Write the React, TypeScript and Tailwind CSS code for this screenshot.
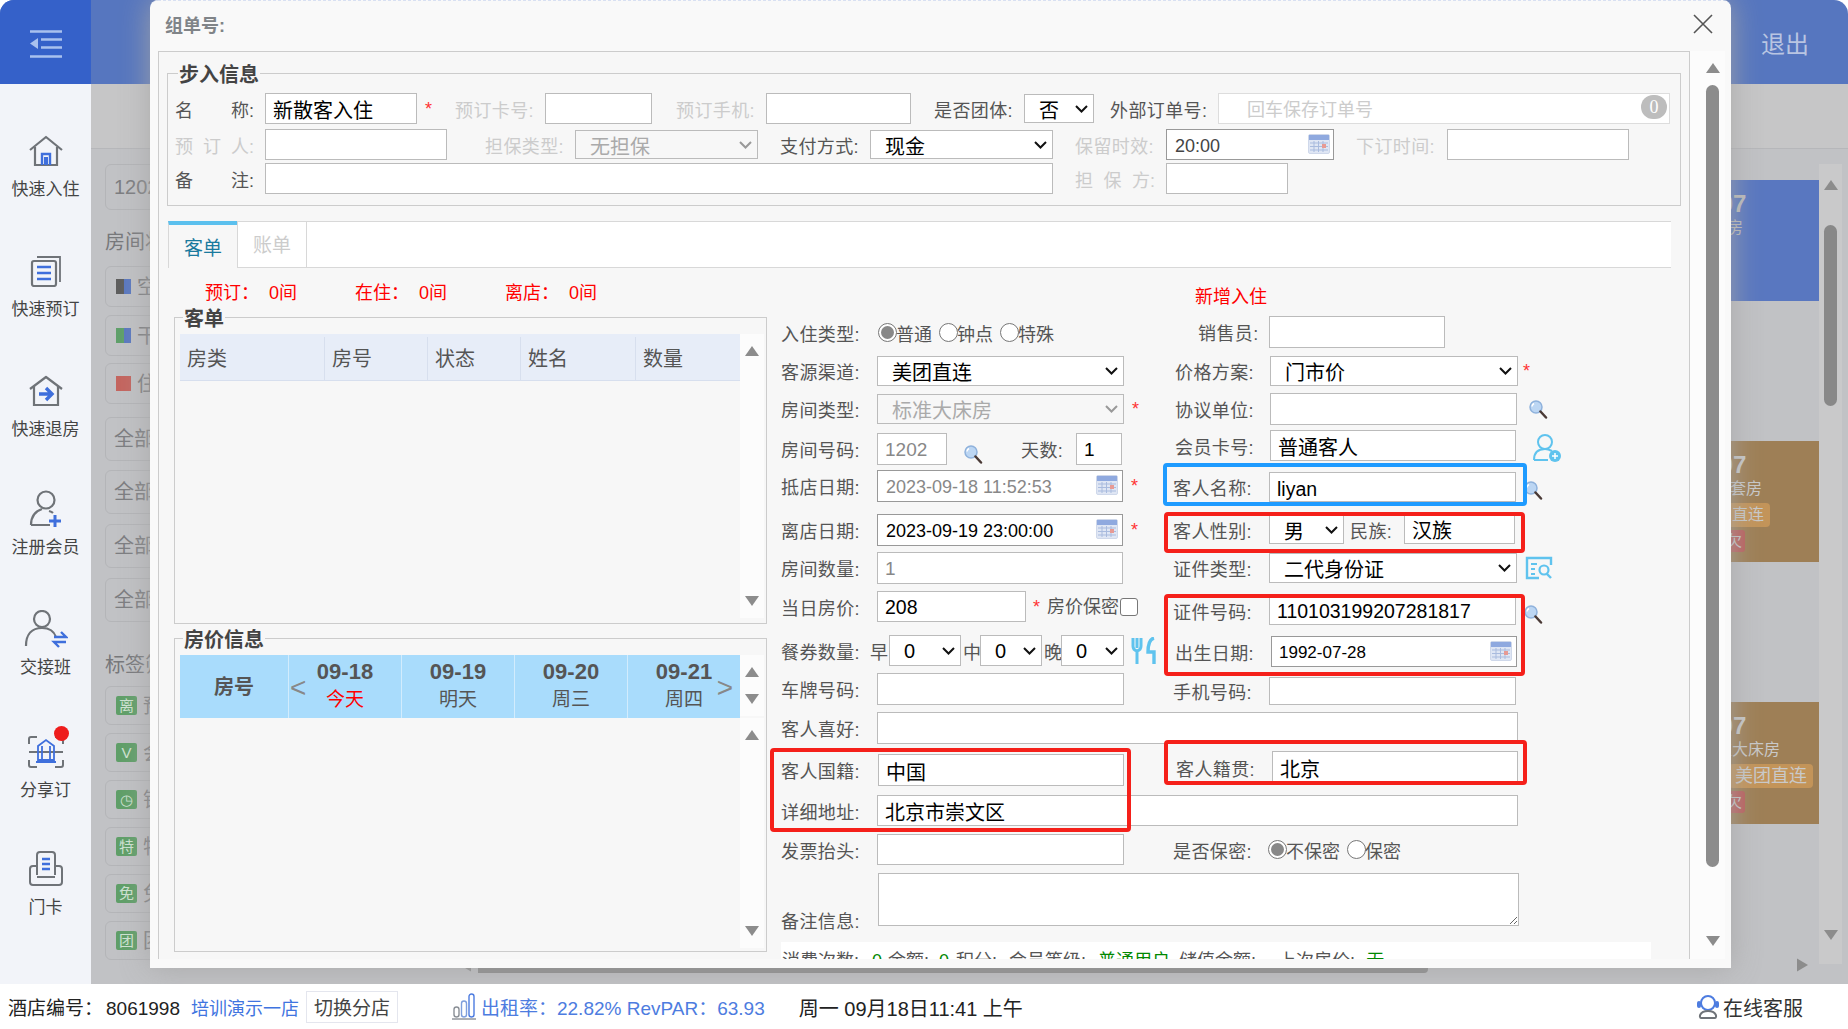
import type { ReactNode } from "react";

const fld = "border border-[#bbb] bg-white outline-none";

function Input({ className = "", value = "", text = "text-[20px] text-black", pad = "pl-[7px]" }: { className?: string; value?: string; text?: string; pad?: string }) {
  return <input readOnly value={value} className={`${fld} ${text} ${pad} shrink-0 pt-[2px] ${className}`} />;
}

function Select({ className = "", value, disabled = false }: { className?: string; value: string; disabled?: boolean }) {
  return (
    <div className={`relative shrink-0 ${className}`}>
      <select disabled={disabled} defaultValue={value} className={`h-full w-full appearance-none border border-[#bbb] pl-[14px] pt-[1px] text-[20px] outline-none ${disabled ? "bg-[#f7f7f7] text-[#aaa]" : "bg-white text-black"}`}>
        <option>{value}</option>
      </select>
      <svg viewBox="0 0 13 8" className="pointer-events-none absolute right-[6px] top-1/2 h-[8px] w-[13px] -translate-y-1/2" fill="none">
        <path d="M1 1l5.500 5.500L12 1" stroke={disabled ? "#999" : "#111"} strokeWidth="2" />
      </svg>
    </div>
  );
}

function Label({ children, className = "" }: { children: ReactNode; className?: string }) {
  return <span className={`mt-[4px] shrink-0 whitespace-nowrap text-[18px] leading-none tracking-[0.4px] ${className}`}>{children}</span>;
}

// 名 称: style labels, spread over the label column
function SpreadLabel({ chars, off = false }: { chars: string[]; off?: boolean }) {
  return (
    <span className={`mt-[4px] flex w-[79px] shrink-0 justify-between text-[18px] leading-none ${off ? "text-[#ccc]" : "text-[#555]"}`}>
      {chars.map((c) => <span key={c}>{c}</span>)}
    </span>
  );
}

function Star({ className = "" }: { className?: string }) {
  return <span className={`shrink-0 text-[18px] leading-none text-[#f33] ${className}`}>*</span>;
}

function Calendar({ className = "" }: { className?: string }) {
  return (
    <svg viewBox="0 0 22 20" className={`absolute h-[20px] w-[22px] ${className}`}>
      <rect x="0.5" y="0.5" width="21" height="19" rx="1.5" fill="#dfe6f4" stroke="#cfd8ea" />
      <rect x="1" y="1" width="20" height="5" fill="#8fa9df" />
      <path d="M2 9h18M2 12.5h18M2 16h18M6 7v11M10.500 7v11M15 7v11" stroke="#a9bbde" strokeWidth="1" />
      <rect x="14" y="10" width="4" height="4" fill="#e79a94" />
    </svg>
  );
}

function Search({ className = "" }: { className?: string }) {
  return (
    <svg viewBox="0 0 20 20" className={`h-[20px] w-[20px] shrink-0 ${className}`}>
      <circle cx="8" cy="8" r="6" fill="#bcd6f3" stroke="#8fb2dc" strokeWidth="1.500" />
      <path d="M6 4.500a4 4 0 0 0-2 3" stroke="#fff" strokeWidth="1.500" fill="none" />
      <path d="M12.500 12.500l5.500 6" stroke="#4a3a36" strokeWidth="2.500" strokeLinecap="round" />
    </svg>
  );
}

function Radio({ on = false, className = "" }: { on?: boolean; className?: string }) {
  return (
    <span className={`flex h-[19px] w-[19px] shrink-0 items-center justify-center rounded-full border border-[#777] bg-white ${className}`}>
      {on && <span className="h-[13px] w-[13px] rounded-full bg-[#888]" />}
    </span>
  );
}

function Arrow({ down = false, className = "" }: { down?: boolean; className?: string }) {
  return (
    <svg viewBox="0 0 14 10" className={`h-[10px] w-[14px] shrink-0 ${className}`}>
      <path d={down ? "M0 0h14L7 10z" : "M7 0l7 10H0z"} fill="#8c8c8c" />
    </svg>
  );
}

function ScrollStrip({ className = "" }: { className?: string }) {
  return (
    <div className={`flex w-[24px] flex-col items-center justify-between bg-[#fcfcfc] ${className}`}>
      <Arrow />
      <Arrow down />
    </div>
  );
}

function SideItem({ icon, label, className }: { icon: ReactNode; label: string; className: string }) {
  return (
    <div className={`flex flex-col items-center ${className}`}>
      <div className="flex h-[36px] items-center justify-center">{icon}</div>
      <span className="mt-[10px] text-[17px] leading-[22px] text-[#444]">{label}</span>
    </div>
  );
}

const gray = "#6f7378";
const blue = "#3f6fdc";

const sideIcons = {
  home: (
    <svg width="36" height="32" viewBox="0 0 36 32" fill="none">
      <path d="M2 15L18 2l16 13" stroke={gray} strokeWidth="2.200" strokeLinejoin="round" />
      <path d="M7 12v18h22V12" stroke={gray} strokeWidth="2.200" />
      <path d="M14 30V19h8v11" stroke={blue} strokeWidth="2.400" />
      <rect x="16" y="22" width="4" height="8" fill={blue} />
    </svg>
  ),
  book: (
    <svg width="32" height="32" viewBox="0 0 32 32" fill="none">
      <path d="M7 2h23v25" stroke={gray} strokeWidth="1.800" />
      <rect x="2" y="6" width="24" height="25" rx="2" stroke={gray} strokeWidth="2.200" />
      <path d="M7 12h14M7 18h14M7 24h14" stroke={blue} strokeWidth="2.400" />
    </svg>
  ),
  out: (
    <svg width="36" height="32" viewBox="0 0 36 32" fill="none">
      <path d="M2 14L18 2l16 12" stroke={gray} strokeWidth="2.200" strokeLinejoin="round" />
      <path d="M6 11v19h24V11" stroke={gray} strokeWidth="2.200" />
      <path d="M11 19h12M18 13l6 6-6 6" stroke={blue} strokeWidth="3.400" />
    </svg>
  ),
  member: (
    <svg width="34" height="38" viewBox="0 0 34 38" fill="none">
      <circle cx="17" cy="10" r="8.500" stroke={gray} strokeWidth="2.200" />
      <path d="M2 35c0-9 5-14 11-16M2 35h19" stroke={gray} strokeWidth="2.200" />
      <path d="M20 21c2 .6 3 1 4 2" stroke={gray} strokeWidth="2.200" />
      <path d="M26 25v12M20 31h12" stroke={blue} strokeWidth="3" />
    </svg>
  ),
  shift: (
    <svg width="44" height="38" viewBox="0 0 44 38" fill="none">
      <circle cx="18" cy="9" r="8" stroke={gray} strokeWidth="2.200" />
      <path d="M2 36c0-12 6-18 16-18 7 0 12 3 14 9" stroke={gray} strokeWidth="2.200" />
      <path d="M30 27h12l-5-5M42 32H30l5 5" stroke={blue} strokeWidth="2.400" />
    </svg>
  ),
  share: (
    <div className="relative">
      <svg width="36" height="34" viewBox="0 0 36 34" fill="none">
        <path d="M9 2H3a2 2 0 0 0-2 2v5M27 2h6a2 2 0 0 1 2 2v5M9 32H3a2 2 0 0 1-2-2v-5M27 32h6a2 2 0 0 0 2-2v-5" stroke={gray} strokeWidth="2" />
        <path d="M1 17h34" stroke={gray} strokeWidth="2" />
        <path d="M10 25V11l8-6 8 6v14zM14 11v14M22 11v14M8 27h20" stroke={blue} strokeWidth="1.800" />
      </svg>
      <span className="absolute -right-[5px] -top-[9px] h-[15px] w-[15px] rounded-full bg-[#ee1c1c]" />
    </div>
  ),
  card: (
    <svg width="36" height="36" viewBox="0 0 36 36" fill="none">
      <path d="M9 24V4a3 3 0 0 1 3-3h12a3 3 0 0 1 3 3v20" stroke={gray} strokeWidth="2" />
      <path d="M9 15H5a3 3 0 0 0-3 3v13a3 3 0 0 0 3 3h26a3 3 0 0 0 3-3V18a3 3 0 0 0-3-3h-4M9 26h18" stroke={gray} strokeWidth="2" />
      <path d="M14 8h8M14 13h8M14 18h8" stroke={blue} strokeWidth="2.400" />
    </svg>
  ),
};

const tagIcon = "flex h-[19px] w-[21px] shrink-0 items-center justify-center rounded-[2px] bg-[#5f9f68] text-[15px] leading-none text-[#cfe3d2]";

function BgRow({ children, className }: { children: ReactNode; className: string }) {
  return <div className={`flex w-[260px] items-center gap-[6px] rounded-[6px] border border-[#b4b5b8] pl-[8px] text-[20px] text-[#7c7d80] ${className}`}>{children}</div>;
}

function Swatch({ a, b }: { a: string; b: string }) {
  return (
    <span className="ml-[2px] flex h-[15px] w-[15px] shrink-0">
      <span className={`w-1/2 ${a}`} />
      <span className={`w-1/2 ${b}`} />
    </span>
  );
}

function DateCol({ date, day, today = false }: { date: string; day: string; today?: boolean }) {
  return (
    <div className="flex flex-col items-center border-l border-[#d2ecfd] pt-[4px]">
      <span className="text-[22px] font-bold leading-[26px] text-[#555]">{date}</span>
      <span className={`mt-[2px] text-[19px] leading-[26px] ${today ? "text-[#f00]" : "text-[#555]"}`}>{day}</span>
    </div>
  );
}

function Legend({ children }: { children: ReactNode }) {
  return (
    <legend className="ml-[3px] px-[1px] text-[20px] font-bold leading-[24px] text-[#444]">
      <span className="relative top-[2px]">{children}</span>
    </legend>
  );
}

function Count({ name }: { name: string }) {
  return (
    <span className="w-[150px]">{name}：<span className="ml-[10px]">0间</span></span>
  );
}

const lab = "w-[96px] text-[#555]";
const digits = "text-[19.5px] text-black";

export default function App() {
  return (
    <div className="relative flex h-[1029px] w-[1848px] flex-col overflow-hidden bg-white [font-family:'Liberation_Sans','Noto_Sans_CJK_SC',sans-serif]">
      {/* page behind the dialog */}
      <div className="flex h-[84px] shrink-0 items-center justify-between rounded-t-[14px] bg-[#5676bf]">
        <div className="flex h-full w-[91px] items-center justify-center rounded-tl-[14px] bg-[#3561c9] pt-[4px]">
          <svg width="32" height="28" viewBox="0 0 32 28">
            <path d="M0 1.500h32M11 9.500h21M11 17.500h21M0 26.500h32" stroke="#a9c1ee" strokeWidth="2.400" />
            <path d="M8 8v11l-8-5.500z" fill="#a9c1ee" />
          </svg>
        </div>
        <span className="mr-[39px] mt-[5px] text-[24px] text-[#b9c5e2]">退出</span>
      </div>

      <div className="flex min-h-0 flex-1">
        <div className="w-[91px] shrink-0 bg-[#f2f4f9] pt-[49px]">
          <SideItem icon={sideIcons.home} label="快速入住" className="h-[120px]" />
          <SideItem icon={sideIcons.book} label="快速预订" className="h-[120px]" />
          <SideItem icon={sideIcons.out} label="快速退房" className="h-[118px]" />
          <SideItem icon={sideIcons.member} label="注册会员" className="h-[120px]" />
          <SideItem icon={sideIcons.shift} label="交接班" className="h-[123px]" />
          <SideItem icon={sideIcons.share} label="分享订" className="h-[117px]" />
          <SideItem icon={sideIcons.card} label="门卡" className="h-[100px]" />
        </div>

        <div className="flex min-w-0 flex-1 flex-col bg-[#c1c2c5]">
          <div className="h-[65px] shrink-0 border-b border-[#b6b7ba] bg-[#c6c6c7]" />
          <div className="flex min-h-0 flex-1">
            <div className="flex w-[300px] shrink-0 flex-col pl-[14px] pt-[15px]">
              <BgRow className="h-[46px]">1202</BgRow>
              <span className="mt-[20px] text-[20px] leading-[24px] text-[#77787b]">房间状态</span>
              <BgRow className="mt-[12px] h-[41px]"><Swatch a="bg-[#5e5e5e]" b="bg-[#5a78c0]" />空房</BgRow>
              <BgRow className="mt-[8px] h-[41px]"><Swatch a="bg-[#5fa06a]" b="bg-[#5a78c0]" />干净</BgRow>
              <BgRow className="mt-[7px] h-[41px]"><Swatch a="bg-[#c4655f]" b="bg-[#c4655f]" />住人</BgRow>
              <BgRow className="mt-[13px] h-[44px]">全部房型</BgRow>
              <BgRow className="mt-[9px] h-[44px]">全部楼栋</BgRow>
              <BgRow className="mt-[10px] h-[44px]">全部楼层</BgRow>
              <BgRow className="mt-[10px] h-[44px]">全部渠道</BgRow>
              <span className="mt-[31px] text-[20px] leading-[24px] text-[#77787b]">标签筛选</span>
              <BgRow className="mt-[9px] h-[39px]"><span className={`ml-[2px] ${tagIcon}`}>离</span>预离</BgRow>
              <BgRow className="mt-[8px] h-[39px]"><span className={`ml-[2px] ${tagIcon}`}>V</span>会员</BgRow>
              <BgRow className="mt-[8px] h-[39px]"><span className={`ml-[2px] ${tagIcon}`}>◷</span>钟点</BgRow>
              <BgRow className="mt-[8px] h-[39px]"><span className={`ml-[2px] ${tagIcon}`}>特</span>特殊</BgRow>
              <BgRow className="mt-[8px] h-[39px]"><span className={`ml-[2px] ${tagIcon}`}>免</span>免费</BgRow>
              <BgRow className="mt-[8px] h-[39px]"><span className={`ml-[2px] ${tagIcon}`}>团</span>团队</BgRow>
            </div>
            <div className="flex min-w-0 flex-1 flex-col">
              <div className="flex min-h-0 flex-1 justify-end pr-[6px] pt-[15px]">
                <div className="flex w-[220px] flex-col pt-[16px]">
                  <div className="h-[121px] bg-[#5977c0] text-[#bcbcbc]">
                    <div className="ml-[94px] pt-[12px] text-[24px] font-bold leading-[24px]">1207</div>
                    <div className="ml-[96px] text-[16px] leading-[24px]">标准房</div>
                  </div>
                  <div className="mt-[140px] h-[121px] bg-[#9e7f56] text-[#c9c9c9]">
                    <div className="ml-[94px] pt-[12px] text-[24px] font-bold leading-[24px]">1207</div>
                    <div className="ml-[99px] text-[16px] leading-[24px]">豪华套房</div>
                    <div className="ml-[127px] mt-[2px] w-fit rounded-[4px] bg-[#c39459] px-[6px] text-[16px] leading-[24px]">直连</div>
                    <div className="ml-[124px] mt-[3px] w-fit rounded-[3px] bg-[#bb5f5c] pl-[4px] pr-[3px] text-[15px] leading-[22px]">欠</div>
                  </div>
                  <div className="mt-[140px] h-[122px] bg-[#9e7f56] text-[#c9c9c9]">
                    <div className="ml-[94px] pt-[12px] text-[24px] font-bold leading-[24px]">1207</div>
                    <div className="ml-[101px] text-[16px] leading-[24px]">标准大床房</div>
                    <div className="ml-[130px] mt-[2px] w-fit rounded-[4px] bg-[#c39459] px-[6px] text-[18px] leading-[24px]">美团直连</div>
                    <div className="ml-[124px] mt-[3px] w-fit rounded-[3px] bg-[#bb5f5c] pl-[4px] pr-[3px] text-[15px] leading-[22px]">欠</div>
                  </div>
                </div>
                <div className="flex w-[23px] flex-col items-center bg-[#c9c9ca] pt-[16px]">
                  <Arrow className="mb-[35px]" />
                  <div className="h-[181px] w-[13px] rounded-[7px] bg-[#888]" />
                  <Arrow down className="mt-auto mb-[24px]" />
                </div>
              </div>
              <div className="flex h-[20px] shrink-0 pr-[40px]">
                <svg viewBox="0 0 10 12" className="ml-[69px] mt-[-6px] h-[14px] w-[11px] rotate-180"><path d="M0 0l10 6-10 6z" fill="#8c8c8c" /></svg>
                <div className="ml-[7px] h-[9px] w-[950px] shrink-0 rounded-r-[4px] bg-[#888]" />
                <svg viewBox="0 0 10 12" className="ml-auto mt-[-6px] h-[14px] w-[11px]"><path d="M0 0l10 6-10 6z" fill="#8c8c8c" /></svg>
              </div>
            </div>
          </div>
        </div>
      </div>

      <div className="relative z-20 flex h-[45px] shrink-0 items-center bg-white pl-[8px] text-[19px] leading-none text-[#222]">
        <span className="mt-[4px]">酒店编号：</span>
        <span className="ml-[3px] mt-[4px]">8061998</span>
        <span className="ml-[11px] mt-[4px] text-[18px] text-[#3f74e0]">培训演示一店</span>
        <span className="ml-[7px] flex h-[32px] w-[92px] items-center justify-center border border-[#e4e6ee] pt-[3px] text-[#444]">切换分店</span>
        <svg width="24" height="27" viewBox="0 0 24 27" fill="none" className="ml-[54px]">
          <rect x="2" y="14" width="5" height="10" rx="2.500" stroke="#8a8f96" strokeWidth="1.400" />
          <rect x="9.500" y="8" width="5" height="16" rx="2.500" stroke="#7f9fdc" strokeWidth="1.400" />
          <rect x="17" y="1" width="5" height="23" rx="2.500" stroke="#4d7ce0" strokeWidth="1.400" />
          <path d="M0 26h24" stroke="#8a8f96" strokeWidth="1.400" />
        </svg>
        <span className="ml-[5px] mt-[4px] text-[#4d7ce0]">出租率：22.82% RevPAR：63.93</span>
        <span className="ml-[34px] mt-[4px] text-[20px] text-[#222]">周一 09月18日11:41 上午</span>
        <svg width="24" height="26" viewBox="0 0 24 26" fill="none" className="ml-auto">
          <circle cx="12" cy="9" r="7" stroke="#4d7ce0" strokeWidth="2" />
          <rect x="1" y="7" width="4" height="7" rx="2" fill="#4d7ce0" />
          <rect x="19" y="7" width="4" height="7" rx="2" fill="#4d7ce0" />
          <path d="M5 24c-2 0-2-7 7-7s9 7 7 7z" stroke="#6f7378" strokeWidth="2" />
        </svg>
        <span className="ml-[3px] mr-[45px] mt-[4px] text-[20px] text-[#333]">在线客服</span>
      </div>

      {/* dialog */}
      <div className="absolute left-[150px] top-0 z-10 flex h-[968px] w-[1581px] flex-col overflow-hidden rounded-tl-[8px] rounded-tr-[8px] border-t border-dashed border-[#d8e0f2] bg-[#f9f9f9] pl-[8px] shadow-[0_0_30px_rgba(165,165,165,0.9)]">
        <div className="relative flex h-[50px] shrink-0 items-center pl-[7px] text-[18px] font-bold text-[#808488]">
          组单号:
          <svg width="20" height="20" viewBox="0 0 20 20" className="absolute right-[18px] top-[13px]"><path d="M1 1l18 18M19 1L1 19" stroke="#555" strokeWidth="1.600" /></svg>
        </div>
        <div className="flex h-[908px] shrink-0">
          <div className="flex h-full w-[1532px] shrink-0 flex-col overflow-hidden border border-b-0 border-[#ccc] bg-[#f7f7f7] pl-[8px]">
            <fieldset className="mt-[9px] h-[145px] w-[1514px] shrink-0 border border-[#ccc] pl-[7px] pt-[8px]">
              <Legend>步入信息</Legend>
              <div className="flex h-[31px] items-center">
                <SpreadLabel chars={["名", "称:"]} />
                <Input className="ml-[11px] h-[31px] w-[152px]" value="新散客入住" />
                <Star className="ml-[8px] w-[10px]" />
                <Label className="ml-[20px] w-[79px] text-[#ccc]">预订卡号:</Label>
                <Input className="ml-[11px] h-[31px] w-[107px]" />
                <Label className="ml-[24px] w-[79px] text-[#ccc]">预订手机:</Label>
                <Input className="ml-[11px] h-[31px] w-[145px]" />
                <Label className="ml-[23px] w-[80px] text-[#555]">是否团体:</Label>
                <Select className="ml-[10px] h-[29px] w-[70px]" value="否" />
                <Label className="ml-[16px] w-[97px] text-[#555]">外部订单号:</Label>
                <div className="relative ml-[11px] h-[31px] w-[452px] shrink-0">
                  <input readOnly placeholder="回车保存订单号" className="h-full w-full border border-[#ddd] bg-white pl-[28px] pt-[3px] text-[18px] outline-none placeholder:text-[#ccc]" />
                  <span className="absolute right-[3px] top-[2px] flex h-[24px] w-[26px] items-center justify-center rounded-full bg-[#bdbdbd] text-[18px] leading-none text-white [font-family:'Liberation_Serif',serif]">0</span>
                </div>
              </div>
              <div className="mt-[5px] flex h-[31px] items-center">
                <SpreadLabel off chars={["预", "订", "人:"]} />
                <Input className="ml-[11px] h-[31px] w-[182px]" />
                <Label className="ml-[38px] w-[79px] text-[#ccc]">担保类型:</Label>
                <Select disabled className="ml-[11px] h-[29px] w-[183px]" value="无担保" />
                <Label className="ml-[22px] w-[80px] text-[#555]">支付方式:</Label>
                <Select className="ml-[10px] h-[29px] w-[183px]" value="现金" />
                <Label className="ml-[22px] w-[80px] text-[#ccc]">保留时效:</Label>
                <div className="relative ml-[11px] h-[31px] w-[168px] shrink-0">
                  <input readOnly value="20:00" className="h-full w-full border border-[#999] bg-white pl-[8px] pt-[4px] text-[18px] text-[#444] outline-none" />
                  <Calendar className="right-[4px] top-[5px]" />
                </div>
                <Label className="ml-[22px] w-[80px] text-[#ccc]">下订时间:</Label>
                <Input className="ml-[11px] h-[31px] w-[182px]" />
              </div>
              <div className="mt-[3px] flex h-[31px] items-center">
                <SpreadLabel chars={["备", "注:"]} />
                <Input className="ml-[11px] h-[31px] w-[788px]" />
                <span className="ml-[22px] mt-[4px] flex w-[80px] shrink-0 justify-between text-[18px] leading-none text-[#ccc]"><span>担</span><span>保</span><span>方:</span></span>
                <Input className="ml-[11px] h-[31px] w-[122px]" />
              </div>
            </fieldset>

            <div className="ml-[1px] mt-[15px] flex h-[47px] w-[1503px] shrink-0 border-y border-[#d8d8d8] bg-white">
              <div className="mb-[-1px] mt-[-1px] flex w-[69px] items-center justify-center border-l border-t-[4px] border-[#d8d8d8] border-t-[#5bc0ee] bg-[#f7f7f7] pt-[5px] text-[19px] text-[#1a7a9e]">客单</div>
              <div className="flex w-[70px] items-center justify-center border-x border-[#d8d8d8] pt-[3px] text-[19px] text-[#ccc]">账单</div>
            </div>

            <div className="flex min-h-0 flex-1 pl-[7px]">
              <div className="w-[593px] shrink-0">
                <div className="flex h-[37px] items-end pl-[31px] text-[18px] leading-[24px] text-[#f00]">
                  <Count name="预订" />
                  <Count name="在住" />
                  <Count name="离店" />
                </div>
                <fieldset className="h-[319px] border border-[#ccc] pl-[5px] pt-[5px]">
                  <Legend>客单</Legend>
                  <div className="flex">
                    <div className="w-[560px]">
                      <div className="grid h-[47px] grid-cols-[144px_103px_93px_115px_105px] border-b border-[#d7dfee] bg-[#e7edf8] pt-[3px] text-[20px] text-[#555]">
                        {["房类", "房号", "状态", "姓名", "数量"].map((h, i) => (
                          <div key={h} className={`flex items-center pl-[7px] ${i > 0 ? "border-l border-[#d7dfee]" : ""}`}>{h}</div>
                        ))}
                      </div>
                    </div>
                    <ScrollStrip className="h-[284px] py-[12px]" />
                  </div>
                </fieldset>
                <fieldset className="mt-[2px] h-[326px] border border-[#ccc] pl-[5px] pt-[5px]">
                  <Legend>房价信息</Legend>
                  <div className="flex">
                    <div className="w-[560px]">
                      <div className="relative grid h-[63px] grid-cols-[108px_113px_113px_113px_113px] bg-[#a9dcfc]">
                        <div className="flex items-center justify-center text-[20px] font-bold text-[#555]">房号</div>
                        <DateCol date="09-18" day="今天" today />
                        <DateCol date="09-19" day="明天" />
                        <DateCol date="09-20" day="周三" />
                        <DateCol date="09-21" day="周四" />
                        <span className="absolute left-[110px] top-[19px] text-[28px] leading-none text-[#888]">&lt;</span>
                        <span className="absolute right-[7px] top-[19px] text-[28px] leading-none text-[#888]">&gt;</span>
                      </div>
                    </div>
                    <div className="w-[24px]">
                      <ScrollStrip className="h-[61px] py-[12px]" />
                      <ScrollStrip className="mt-[2px] h-[230px] py-[12px]" />
                    </div>
                  </div>
                </fieldset>
              </div>

              <div className="ml-[14px] w-[800px] shrink-0">
                <div className="flex h-[49px] items-end pb-[8px] pl-[414px] text-[18px] leading-[24px] text-[#f00]">新增入住</div>
                <div className="flex items-start">
                  <div className="flex w-[392px] shrink-0 flex-col">
                    <div className="flex h-[32px] items-center">
                      <Label className={lab}>入住类型:</Label>
                      <Radio on className="ml-[1px] -mt-[1px]" />
                      <span className="ml-[-1px] mt-[4px] text-[18px] leading-none text-[#555]">普通</span>
                      <Radio className="ml-[7px] -mt-[1px]" />
                      <span className="ml-[-1px] mt-[4px] text-[18px] leading-none text-[#555]">钟点</span>
                      <Radio className="ml-[7px] -mt-[1px]" />
                      <span className="ml-[-1px] mt-[4px] text-[18px] leading-none text-[#555]">特殊</span>
                    </div>
                    <div className="mt-[7px] flex h-[30px] items-center">
                      <Label className={lab}>客源渠道:</Label>
                      <Select className="h-[30px] w-[247px]" value="美团直连" />
                    </div>
                    <div className="mt-[8px] flex h-[30px] items-center">
                      <Label className={lab}>房间类型:</Label>
                      <Select disabled className="h-[30px] w-[247px]" value="标准大床房" />
                      <Star className="ml-[8px]" />
                    </div>
                    <div className="mt-[9px] flex h-[32px] items-center">
                      <Label className={lab}>房间号码:</Label>
                      <Input className="h-[32px] w-[70px]" text="text-[19px] text-[#888]" value="1202" />
                      <Search className="ml-[16px] mt-[10px]" />
                      <Label className="ml-[38px] w-[55px] text-[#555]">天数:</Label>
                      <Input className="h-[32px] w-[46px]" text="text-[19px] text-black" value="1" />
                    </div>
                    <div className="mt-[5px] flex h-[32px] items-center">
                      <Label className={lab}>抵店日期:</Label>
                      <div className="relative h-[32px] w-[246px] shrink-0">
                        <input readOnly value="2023-09-18 11:52:53" className="h-full w-full border border-[#999] bg-white pl-[8px] pt-[2px] text-[18px] text-[#888] outline-none" />
                        <Calendar className="right-[5px] top-[5px]" />
                      </div>
                      <Star className="ml-[8px]" />
                    </div>
                    <div className="mt-[12px] flex h-[32px] items-center">
                      <Label className={lab}>离店日期:</Label>
                      <div className="relative h-[32px] w-[246px] shrink-0">
                        <input readOnly value="2023-09-19 23:00:00" className="h-full w-full border border-[#999] bg-white pl-[8px] pt-[2px] text-[18px] text-black outline-none" />
                        <Calendar className="right-[5px] top-[5px]" />
                      </div>
                      <Star className="ml-[8px]" />
                    </div>
                    <div className="mt-[6px] flex h-[32px] items-center">
                      <Label className={lab}>房间数量:</Label>
                      <Input className="h-[32px] w-[246px]" text="text-[19px] text-[#888]" value="1" />
                    </div>
                    <div className="mt-[7px] flex h-[31px] items-center">
                      <Label className={lab}>当日房价:</Label>
                      <Input className="h-[31px] w-[149px]" text={digits} value="208" />
                      <Star className="ml-[7px]" />
                      <span className="ml-[7px] text-[18px] leading-none text-[#555]">房价保密</span>
                      <span className="ml-[1px] h-[18px] w-[18px] rounded-[3px] border border-[#777] bg-white" />
                    </div>
                    <div className="mt-[13px] flex h-[31px] items-center text-[18px] leading-none text-[#555]">
                      <Label className="w-[89px] text-[#555]">餐券数量:</Label>
                      <span className="mt-[4px]">早</span>
                      <Select className="ml-[1px] h-[31px] w-[72px]" value="0" />
                      <span className="ml-[2px] mt-[4px]">中</span>
                      <Select className="ml-[-1px] h-[31px] w-[62px]" value="0" />
                      <span className="ml-[2px] mt-[4px]">晚</span>
                      <Select className="ml-[-1px] h-[31px] w-[63px]" value="0" />
                      <svg width="26" height="28" viewBox="0 0 26 28" fill="none" className="ml-[7px] shrink-0">
                        <path d="M2 1v8c0 3 2 4.500 4 5v13M6 1v10M10 1v8c0 3-2 4.500-4 5" stroke="#5fc3ee" strokeWidth="3" />
                        <path d="M23 1c-4 1-6 6-6 14h6v12" stroke="#5fc3ee" strokeWidth="3.400" />
                      </svg>
                    </div>
                    <div className="mt-[7px] flex h-[32px] items-center">
                      <Label className={lab}>车牌号码:</Label>
                      <Input className="h-[32px] w-[247px]" />
                    </div>
                  </div>

                  <div className="-mt-[1px] flex flex-col">
                    <div className="flex h-[32px] items-center">
                      <Label className="w-[96px] pl-[25px] text-[#555]">销售员:</Label>
                      <Input className="h-[32px] w-[176px]" />
                    </div>
                    <div className="mt-[8px] flex h-[30px] items-center">
                      <Label className="w-[97px] pl-[2px] text-[#555]">价格方案:</Label>
                      <Select className="h-[30px] w-[248px]" value="门市价" />
                      <Star className="ml-[5px]" />
                    </div>
                    <div className="mt-[7px] flex h-[32px] items-center">
                      <Label className="w-[97px] pl-[2px] text-[#555]">协议单位:</Label>
                      <Input className="h-[32px] w-[247px]" />
                      <Search className="ml-[11px]" />
                    </div>
                    <div className="mt-[5px] flex h-[31px] items-center">
                      <Label className="w-[97px] pl-[2px] text-[#555]">会员卡号:</Label>
                      <Input className="h-[31px] w-[246px]" value="普通客人" />
                      <svg width="30" height="30" viewBox="0 0 30 30" fill="none" className="ml-[16px] mt-[4px] shrink-0">
                        <circle cx="13" cy="9" r="7" stroke="#5fc3ee" strokeWidth="2" />
                        <path d="M2 27c0-7 4-11 11-11 3 0 5 1 7 2M2 27h14" stroke="#5fc3ee" strokeWidth="2" />
                        <circle cx="23" cy="23" r="6" fill="#5fc3ee" />
                        <path d="M23 20v6M20 23h6" stroke="#fff" strokeWidth="1.500" />
                      </svg>
                    </div>
                    <div className="mt-[11px] flex h-[30px] items-center">
                      <Label className="w-[96px] text-[#555]">客人名称:</Label>
                      <Input className="h-[30px] w-[247px] pt-[5px]" text={digits} value="liyan" />
                      <Search className="ml-[7px] mt-[6px]" />
                    </div>
                    <div className="mt-[13px] flex h-[29px] items-center">
                      <Label className="w-[96px] text-[#555]">客人性别:</Label>
                      <Select className="h-[29px] w-[75px]" value="男" />
                      <Label className="ml-[6px] w-[54px] text-[#555]">民族:</Label>
                      <Input className="h-[29px] w-[111px]" value="汉族" />
                    </div>
                    <div className="mt-[9px] flex h-[30px] items-center">
                      <Label className="w-[96px] text-[#555]">证件类型:</Label>
                      <Select className="h-[30px] w-[248px]" value="二代身份证" />
                      <svg width="28" height="24" viewBox="0 0 28 24" fill="none" className="ml-[8px] shrink-0">
                        <path d="M26 9V2H2v20h12" stroke="#5fc3ee" strokeWidth="2.400" />
                        <path d="M6 8h6M6 13h4M6 18h4" stroke="#5fc3ee" strokeWidth="2" />
                        <circle cx="19" cy="14" r="4.500" stroke="#5fc3ee" strokeWidth="2.200" />
                        <path d="M22 18l4 4" stroke="#5fc3ee" strokeWidth="2.400" />
                      </svg>
                    </div>
                    <div className="mt-[13px] flex h-[29px] items-center">
                      <Label className="w-[96px] text-[#555]">证件号码:</Label>
                      <Input className="h-[29px] w-[247px]" text={digits} value="110103199207281817" />
                      <Search className="ml-[7px] mt-[6px]" />
                    </div>
                    <div className="mt-[11px] flex h-[31px] items-center">
                      <Label className="w-[98px] pl-[2px] text-[#555]">出生日期:</Label>
                      <div className="relative h-[31px] w-[246px] shrink-0">
                        <input readOnly value="1992-07-28" className="h-full w-full border border-[#999] bg-white pl-[7px] pt-[2px] text-[17px] text-black outline-none" />
                        <Calendar className="right-[5px] top-[5px]" />
                      </div>
                    </div>
                    <div className="mt-[10px] flex h-[28px] items-center">
                      <Label className="w-[96px] text-[#555]">手机号码:</Label>
                      <Input className="h-[28px] w-[247px]" />
                    </div>
                  </div>
                </div>

                <div className="mt-[7px] flex h-[32px] items-center">
                  <Label className={lab}>客人喜好:</Label>
                  <Input className="h-[32px] w-[641px]" />
                </div>
                <div className="flex h-[35px] items-start">
                  <div className="mt-[10px] flex h-[32px] w-[395px] shrink-0 items-center">
                    <Label className="w-[97px] text-[#555]">客人国籍:</Label>
                    <Input className="h-[32px] w-[246px]" value="中国" />
                  </div>
                  <div className="mt-[7px] flex h-[33px] items-center">
                    <Label className="w-[96px] text-[#555]">客人籍贯:</Label>
                    <Input className="h-[33px] w-[246px]" value="北京" />
                  </div>
                </div>
                <div className="mt-[16px] flex h-[31px] items-center">
                  <Label className={lab}>详细地址:</Label>
                  <Input className="h-[31px] w-[641px]" value="北京市崇文区" />
                </div>
                <div className="mt-[8px] flex h-[31px] items-center">
                  <Label className={lab}>发票抬头:</Label>
                  <Input className="h-[31px] w-[247px]" />
                  <Label className="ml-[49px] w-[96px] text-[#555]">是否保密:</Label>
                  <Radio on className="-mt-[1px] ml-[-1px]" />
                  <span className="ml-[-1px] mt-[4px] text-[18px] leading-none text-[#555]">不保密</span>
                  <Radio className="-mt-[1px] ml-[7px]" />
                  <span className="ml-[-1px] mt-[4px] text-[18px] leading-none text-[#555]">保密</span>
                </div>
                <div className="mt-[8px] flex h-[53px] items-end">
                  <Label className="mb-[-5px] w-[97px] text-[#555]">备注信息:</Label>
                  <textarea readOnly className="h-[53px] w-[641px] border border-[#bbb] bg-white outline-none" />
                </div>
                <div className="mt-[16px] flex h-[40px] w-[870px] bg-white pl-[1px] pt-[9px] text-[18px] leading-[20px] whitespace-nowrap text-[#555]">
                  <span>消费次数:</span>
                  <span className="ml-[13px] text-[#080]">0</span>
                  <span className="ml-[6px]">余额:</span>
                  <span className="ml-[10px] text-[#080]">0</span>
                  <span className="ml-[7px]">积分:</span>
                  <span className="ml-[12px]">会员等级:</span>
                  <span className="ml-[12px] text-[#080]">普通用户</span>
                  <span className="ml-[9px]">储值余额:</span>
                  <span className="ml-[22px]">上次房价:</span>
                  <span className="ml-[11px] text-[#080]">无</span>
                </div>
              </div>
            </div>
          </div>

          <div className="flex w-[35px] shrink-0 flex-col items-center bg-[#fcfcfc] pl-[10px] pt-[12px]">
            <Arrow className="mb-[12px]" />
            <div className="h-[782px] w-[13px] shrink-0 rounded-[7px] bg-[#8c8c8c]" />
            <Arrow down className="mt-[69px]" />
          </div>
        </div>

        {/* annotation boxes on the screenshot */}
        <div className="absolute left-[1013px] top-[462px] h-[43px] w-[364px] rounded-[4px] border-[4px] border-[#1e9bff]" />
        <div className="absolute left-[1014px] top-[511px] h-[41px] w-[361px] rounded-[4px] border-[4px] border-[#f5201a]" />
        <div className="absolute left-[1014px] top-[593px] h-[82px] w-[361px] rounded-[4px] border-[4px] border-[#f5201a]" />
        <div className="absolute left-[620px] top-[747px] h-[84px] w-[361px] rounded-[4px] border-[4px] border-[#f5201a]" />
        <div className="absolute left-[1014px] top-[739px] h-[45px] w-[363px] rounded-[4px] border-[4px] border-[#f5201a]" />
      </div>
    </div>
  );
}
